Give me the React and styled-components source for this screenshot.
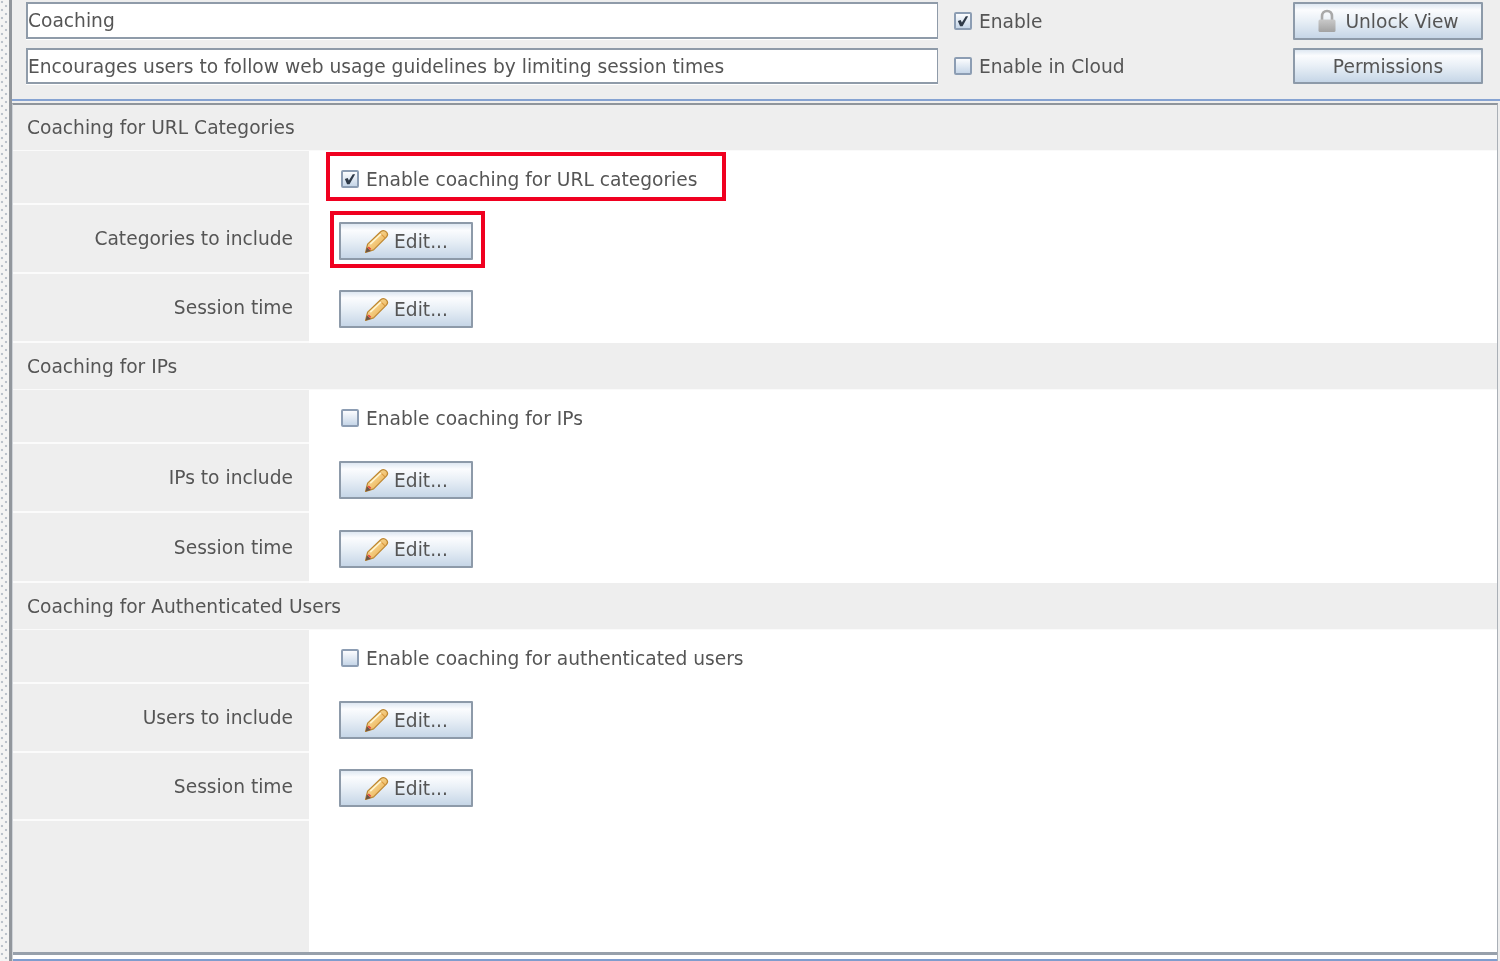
import React from "react";
import styled, { createGlobalStyle } from "styled-components";

const Global = createGlobalStyle`
  html, body { margin: 0; padding: 0; background: #eeeeee; }
  body { font-family: "DejaVu Sans", sans-serif; font-size: 18.65px; color: #555; overflow: hidden; }
  * { box-sizing: border-box; }
`;

const Page = styled.div`
  width: 1500px; height: 961px; display: flex; overflow: hidden; background: #eee; filter: blur(0.45px);
`;
const Grip = styled.div`
  width: 9px; height: 100%; flex: none; background-color: #f4f4f4;
  background-image: radial-gradient(circle at 2px 2px, #bcc3cc 1.2px, transparent 1.6px),
    radial-gradient(circle at 6px 6px, #bcc3cc 1.2px, transparent 1.6px);
  background-size: 8px 8px;
`;
const Main = styled.div`
  flex: 1; display: flex; flex-direction: column; min-width: 0;
  border-left: 3px solid #91969c;
`;
const Toolbar = styled.div`
  height: 99px; flex: none; padding: 2px 17px 0 14px;
  display: grid; grid-template-columns: 912px 1fr 190px; grid-template-rows: 38px 36px; row-gap: 8px;
`;
const TextField = styled.div`
  height: ${(p) => p.$h}px; background: #fff; border: 2px solid #8f9ba9; border-right-width: 1px;
  box-shadow: 0 1px 0 #fff; display: flex; align-items: center; padding-left: 0; white-space: nowrap;
`;
const CheckRow = styled.label`
  display: flex; align-items: center; gap: 7px; white-space: nowrap;
  padding-left: ${(p) => p.$pad || 0}px;
`;
const Box = styled.span`
  width: 18px; height: 18px; flex: none; display: block; border: 2px solid #8c9db3; border-radius: 2px;
  background: linear-gradient(#fbfcfe, #c6d6e8);
  svg { display: block; }
`;
const Button = styled.button`
  font: inherit; color: #555;
  width: ${(p) => p.$w}px; height: ${(p) => p.$h}px; padding: 0;
  border: 2px solid #8d9aa9; border-radius: 1px; display: flex; align-items: center; justify-content: center; gap: ${(p) => p.$gap || 5}px;
  background: linear-gradient(#dfe8f2 0%, #fbfcfe 18%, #e8eff6 50%, #c6d6e7 100%);
`;
const Divider = styled.div`
  height: 4px; flex: none; border-top: 2px solid #86a3d2; background: #eee;
`;
const Panel = styled.div`
  flex: 1; display: flex; flex-direction: column; min-height: 0;
  border-top: 2px solid #8f959c; margin-right: 2px; border-right: 1px solid #aab0b7; border-left: 1px solid #cfd3d8;
`;
const Section = styled.div`
  height: ${(p) => p.$h}px; flex: none; padding-left: 14px; display: flex; align-items: center;
  background: #eee; border-bottom: 1px solid #fafafa;
`;
const Row = styled.div`
  display: grid; grid-template-columns: 296px 1fr; height: ${(p) => p.$h}px; flex: none; background: #fff;
`;
const LabelCell = styled.div`
  background: #eee; border-bottom: 2px solid #fbfbfb; display: flex; align-items: center; justify-content: flex-end;
  padding: 0 16px 0 0;
`;
const FieldCell = styled.div`
  position: relative; display: flex; align-items: ${(p) => (p.$check ? "center" : "flex-start")};
  padding: ${(p) => (p.$check ? "2px" : `${p.$top}px`)} 0 0 ${(p) => (p.$check ? 32 : 30)}px;
`;
const Highlight = styled.div`
  position: absolute; border: 4px solid #f00020; pointer-events: none;
  left: ${(p) => p.$l}px; top: ${(p) => p.$t}px; width: ${(p) => p.$w}px; height: ${(p) => p.$h}px;
`;
const Filler = styled.div`
  flex: 1; display: grid; grid-template-columns: 296px 1fr; background: #fff; min-height: 0;
`;
const FillerLeft = styled.div`background: #eee;`;
const Bottom = styled.div`
  height: 9px; flex: none; background: #fff; border-top: 3px solid #97a0ab; border-bottom: 2px solid #7f9ccd;
`;

const Tick = () => (
  <svg width="14" height="14" viewBox="0 0 15 15">
    <path d="M2 7.5 L5 6.5 L6.3 9 L10.5 2.5 L13 2.5 L7 13 L4.4 13 Z" fill="#2f3a48" />
  </svg>
);

const Check = ({ on, children, pad }) => (
  <CheckRow $pad={pad}>
    <Box>{on && <Tick />}</Box>
    {children}
  </CheckRow>
);

const Pencil = () => (
  <svg width="25" height="25" viewBox="0 0 24 24">
    <defs>
      <linearGradient id="pen" x1="0" y1="0" x2="1" y2="1">
        <stop offset="0" stopColor="#fdeeb5" />
        <stop offset="1" stopColor="#e8a23f" />
      </linearGradient>
    </defs>
    <path d="M1.5 22.5 L3.5 14.5 L16 2.6 C17.8 1.2 20 1.4 21.6 3 C23 4.6 22.8 6.4 21.4 7.8 L9.2 20 Z" fill="url(#pen)" stroke="#bd8732" strokeWidth="1.2" strokeLinejoin="round" />
    <path d="M1.5 22.5 L2.8 17.4 L6.6 21 Z" fill="#6a5548" />
    <path d="M4 17.4 L6.4 19.6" stroke="#e0483e" strokeWidth="1.8" />
    <path d="M15.5 4 L20.2 8.6" stroke="#d9973f" strokeWidth="1" />
    <path d="M6 14.5 L16.5 4.6" stroke="#fff6d2" strokeWidth="1.4" />
  </svg>
);

const Lock = () => (
  <svg width="20" height="24" viewBox="0 0 20 24">
    <defs>
      <linearGradient id="lk" x1="0" y1="0" x2="0" y2="1">
        <stop offset="0" stopColor="#c9c9c9" />
        <stop offset="1" stopColor="#a2a2a2" />
      </linearGradient>
    </defs>
    <path d="M5 11 V7.5 C5 4 7 2 10 2 C13 2 15 4 15 7.5 V11" fill="none" stroke="#a9a9a9" strokeWidth="2.6" />
    <rect x="1.5" y="10.5" width="17" height="12.5" rx="1.5" fill="url(#lk)" />
  </svg>
);

const EditButton = () => (
  <Button type="button" $w={134} $h={38}>
    <Pencil />
    Edit...
  </Button>
);

const groups = [
  {
    title: "Coaching for URL Categories",
    check: "Enable coaching for URL categories",
    on: true,
    a: "Categories to include",
    h: [46, 54, 69, 69],
    sessionTop: 16,
  },
  { title: "Coaching for IPs", check: "Enable coaching for IPs", a: "IPs to include", h: [47, 54, 69, 70], sessionTop: 17 },
  {
    title: "Coaching for Authenticated Users",
    check: "Enable coaching for authenticated users",
    a: "Users to include",
    h: [47, 54, 69, 68],
    sessionTop: 16,
  },
];

export default function App() {
  return (
    <Page>
      <Global />
      <Grip />
      <Main>
        <Toolbar>
          <TextField $h={37}>Coaching</TextField>
          <Check on pad={16}>Enable</Check>
          <Button type="button" $w={190} $h={38} $gap={8}>
            <Lock />
            Unlock View
          </Button>
          <TextField $h={36}>Encourages users to follow web usage guidelines by limiting session times</TextField>
          <Check pad={16}>Enable in Cloud</Check>
          <Button type="button" $w={190} $h={36}>Permissions</Button>
        </Toolbar>
        <Divider />
        <Panel>
          {groups.map((g, i) => (
            <React.Fragment key={g.title}>
              <Section $h={g.h[0]}>{g.title}</Section>
              <Row $h={g.h[1]}>
                <LabelCell />
                <FieldCell $check>
                  <Check on={g.on}>{g.check}</Check>
                  {i === 0 && <Highlight $l={17} $t={1} $w={400} $h={49} />}
                </FieldCell>
              </Row>
              <Row $h={g.h[2]}>
                <LabelCell>{g.a}</LabelCell>
                <FieldCell $top={17}>
                  <EditButton />
                  {i === 0 && <Highlight $l={21} $t={6} $w={155} $h={57} />}
                </FieldCell>
              </Row>
              <Row $h={g.h[3]}>
                <LabelCell>Session time</LabelCell>
                <FieldCell $top={g.sessionTop}>
                  <EditButton />
                </FieldCell>
              </Row>
            </React.Fragment>
          ))}
          <Filler>
            <FillerLeft />
          </Filler>
          <Bottom />
        </Panel>
      </Main>
    </Page>
  );
}
